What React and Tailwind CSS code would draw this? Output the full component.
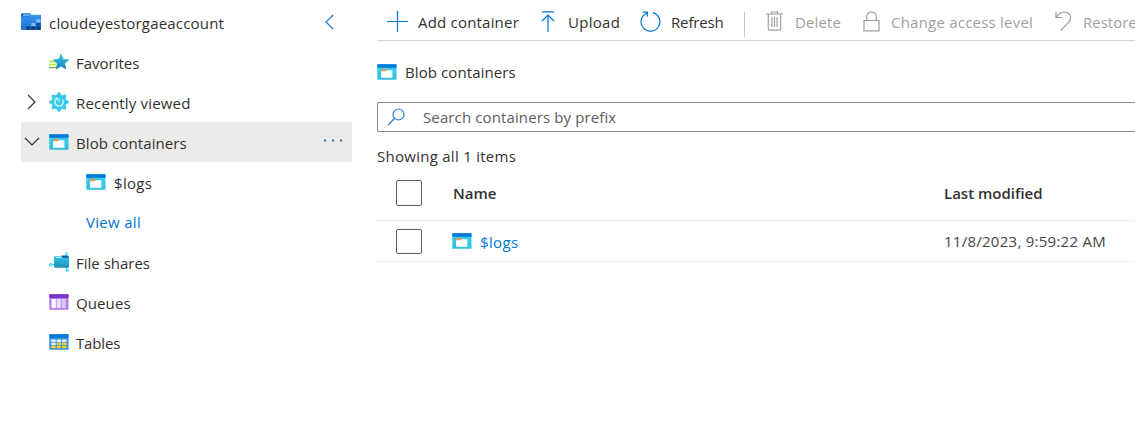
import React from "react";

function ContainerIcon({ className = "" }) {
  return (
    <svg width="20" height="16" viewBox="0 0 20 16" className={"shrink-0 " + className}>
      <defs>
        <linearGradient id="cyan" x1="0" y1="0" x2="0" y2="1">
          <stop offset="0" stopColor="#32d4f5" />
          <stop offset="1" stopColor="#32bedd" />
        </linearGradient>
      </defs>
      <rect x="0.3" y="0.2" width="19.2" height="15.6" rx="0.6" fill="url(#cyan)" />
      <rect x="0.3" y="0.2" width="19.2" height="3.6" rx="0.4" fill="#0078d4" />
      <path d="M4.400 5h4.400l1.200 1.200v2H4.400z" fill="#f0954a" />
      <path d="M4.100 7.200h4.600l1-1h5.700v7.500H4.100z" fill="#fff" />
    </svg>
  );
}

function StorageIcon() {
  return (
    <svg width="20" height="18" viewBox="0 0 20 18" className="shrink-0">
      <defs>
        <linearGradient id="folder" x1="0" y1="0" x2="0" y2="1">
          <stop offset="0" stopColor="#3a97f0" />
          <stop offset="1" stopColor="#1a73d6" />
        </linearGradient>
      </defs>
      <path d="M0 1.500Q0 .5 1 .5h8l1.300 1.300H20V17H0z" fill="url(#folder)" />
      <path d="M0 1.500Q0 .5 1 .5h8L8 3.600H0z" fill="#1b6fc9" />
      <rect x="2" y="1.400" width="6.500" height="1.300" rx=".6" fill="#8cc6ff" />
      <path d="M15.300 6.200h4.200v3.300h-4.200zM10.300 10h4.200v3.100h-4.200z" fill="#83b9f9" />
      <path d="M15.300 10h4.200v3.100h-4.200z" fill="#0a4ea8" />
      <path d="M5.300 13.600h4.200v3.200H5.300zM10.300 13.600h4.200v3.200h-4.200zM15.300 13.600h4.200v3.200h-4.200z" fill="#063c7a" />
    </svg>
  );
}

function FavoritesIcon() {
  return (
    <svg width="20" height="18" viewBox="0 0 20 18" className="shrink-0">
      <defs>
        <linearGradient id="star" x1="0" y1="0" x2="0" y2="1">
          <stop offset="0" stopColor="#35c3e8" />
          <stop offset="1" stopColor="#1b87b5" />
        </linearGradient>
      </defs>
      <path d="M0 8.500h7M0 11.500h7" stroke="#b4ec36" strokeWidth="1.300" />
      <path d="M0 14.500h7" stroke="#76a522" strokeWidth="1.200" />
      <path
        d="M12 1.200l2.300 5.200 5.300.5-4 3.600 1.200 5.500-4.800-2.900-4.800 2.900 1.200-5.500-4-3.600 5.300-.5z"
        fill="url(#star)"
        stroke="url(#star)"
        strokeWidth=".8"
        strokeLinejoin="round"
      />
    </svg>
  );
}

function RecentIcon() {
  return (
    <svg width="20" height="20" viewBox="0 0 20 20" className="shrink-0">
      <g fill="#35c9ec">
        <circle cx="10" cy="10" r="7.4" />
        {[0, 45, 90, 135, 180, 225, 270, 315].map((a) => (
          <path key={a} d="M8.700.7Q8.800.3 9.200.3h1.600q.4 0 .5.4L12.600 4H7.400z" transform={`rotate(${a} 10 10)`} />
        ))}
      </g>
      <path d="M7.300 7A4.100 4.100 0 1 0 13.300 7.400" fill="none" stroke="#d5f6fd" strokeWidth="1.500" />
      <path d="M5.800 5.600h3.200V8.800z" fill="#d5f6fd" />
      <path d="M10.200 6.600v4" fill="none" stroke="#b4ecf8" strokeWidth="1.200" />
    </svg>
  );
}

function FileShareIcon() {
  return (
    <svg width="20" height="20" viewBox="0 0 20 20" className="shrink-0">
      <defs>
        <linearGradient id="share" x1="0" y1="0" x2="0" y2="1">
          <stop offset="0" stopColor="#32c3e8" />
          <stop offset="1" stopColor="#2091b8" />
        </linearGradient>
      </defs>
      <path d="M2 12.500h5M17.500 1.500l-2 4M18.200 18.300l-1.500-4" stroke="#35b3d8" strokeWidth="1" />
      <path d="M12 3.600h7l.8 1v5h-5z" fill="#0f5ca8" />
      <path d="M5 5.200q0-1 1-1h6l1.600 1.600h5.500q.9 0 .9.900v8.100q0 1-1 1H6q-1 0-1-1z" fill="url(#share)" />
      <path d="M7 5h5l.9.900H7z" fill="#b7ecf8" />
      <circle cx="1.9" cy="12.6" r="1.9" fill="#50e6ff" />
      <circle cx="17.5" cy="1.7" r="1.5" fill="#50e6ff" />
      <circle cx="18.3" cy="18.2" r="1.7" fill="#50e6ff" />
    </svg>
  );
}

function QueuesIcon() {
  return (
    <svg width="20" height="16" viewBox="0 0 20 16" className="shrink-0">
      <rect x=".3" y=".2" width="19.2" height="15.6" rx=".6" fill="#b27eec" />
      <rect x=".3" y=".2" width="19.2" height="3.8" rx=".4" fill="#7733cc" />
      <rect x="2.6" y="5" width="4.2" height="9" fill="#fff" />
      <rect x="7.6" y="5" width="4.2" height="9" fill="#eadcfb" />
      <rect x="12.6" y="5" width="4.2" height="9" fill="#dcc5f8" />
    </svg>
  );
}

function TablesIcon() {
  return (
    <svg width="20" height="16" viewBox="0 0 20 16" className="shrink-0">
      <rect x=".3" y=".2" width="19.2" height="15.6" rx=".6" fill="#3b8fe4" />
      <rect x=".3" y=".2" width="19.2" height="3.8" rx=".4" fill="#0078d4" />
      <path d="M2.300 5.600h4.400v2.600H2.300zM7.700 5.600h4.400v2.600H7.700zM13.100 5.600h4.400v2.600h-4.400zM2.300 9h4.400v2.300H2.300z" fill="#e9f2fc" />
      <path d="M7.700 9h4.400v2.300H7.700zM13.100 9h4.400v2.300h-4.400zM2.300 12h4.400v2.300H2.300zM7.700 12h4.400v2.300H7.700zM13.100 12h4.400v2.300h-4.400z" fill="#fcd116" />
    </svg>
  );
}

function Line({ w, h, d, className = "", sw = 1.2 }) {
  return (
    <svg width={w} height={h} viewBox={`0 0 ${w} ${h}`} fill="none" stroke="currentColor" strokeWidth={sw} className={"shrink-0 " + className}>
      <path d={d} />
    </svg>
  );
}

function NavRow({ icon, label, text = "", chevron }) {
  return (
    <div className="flex h-10 items-center">
      <span className="flex w-7 shrink-0 text-[#323130]">{chevron}</span>
      {icon}
      <span className={"ml-[7px] pt-0.5 " + text}>{label}</span>
    </div>
  );
}

function Checkbox({ className }) {
  return <span className={"ml-[19px] w-[26px] shrink-0 rounded-[2px] border border-[#605e5c] " + className} />;
}

export default function App() {
  return (
    <div className="flex h-[436px] w-[1135px] overflow-hidden bg-white font-['Open_Sans',sans-serif] text-[15px] leading-5 whitespace-nowrap text-[#323130]">
      <nav className="ml-[21px] w-[331px] shrink-0 pt-0.5">
        <div className="flex h-10 items-center">
          <StorageIcon />
          <span className="ml-2 pt-0.5 tracking-[0.2px]">cloudeyestorgaeaccount</span>
          <Line w={9} h={16} d="M8.200 1L1 8l7.200 7" className="mr-[18px] ml-auto text-[#2b7cd3]" />
        </div>
        <NavRow icon={<FavoritesIcon />} label="Favorites" />
        <NavRow
          icon={<RecentIcon />}
          label="Recently viewed"
          text="tracking-[0.17px]"
          chevron={<Line w={9} h={16} d="M1 1l7 7-7 7" className="ml-1.5" />}
        />
        <div className="flex h-10 items-center bg-[#edebe9]">
          <Line w={16} h={10} d="M1 1l7 7 7-7" className="ml-[3px] text-[#323130]" />
          <ContainerIcon className="ml-[9px]" />
          <span className="ml-[7px] pt-0.5 tracking-[0.1px]">Blob containers</span>
          <svg width="18" height="3" viewBox="0 0 18 3" fill="#0078d4" className="mr-2.5 mb-[3px] ml-auto">
            <path d="M0 .5h2v2H0zM8 .5h2v2H8zM16 .5h2v2h-2z" />
          </svg>
        </div>
        <div className="flex h-10 items-center pl-[65px]">
          <ContainerIcon />
          <span className="ml-2 pt-0.5 tracking-[0.3px]">$logs</span>
        </div>
        <div className="flex h-10 items-center pl-[65px] text-[#0078d4]">
          <span className="tracking-[0.3px]">View all</span>
        </div>
        <NavRow icon={<FileShareIcon />} label="File shares" />
        <NavRow icon={<QueuesIcon />} label="Queues" text="tracking-[0.1px]" />
        <NavRow icon={<TablesIcon />} label="Tables" text="tracking-[-0.15px]" />
      </nav>

      <main className="ml-[25px] w-[758px] shrink-0">
        <div className="flex h-[41px] items-center border-b border-[#d2d0ce] pt-0.5">
          <div className="flex w-[153px] shrink-0 items-center pl-[10px]">
            <Line w={21} h={21} d="M0 10.500h21M10.500 0v21" className="text-[#0078d4]" />
            <span className="ml-2.5 pt-0.5 tracking-[0.2px]">Add container</span>
          </div>
          <div className="flex w-[103px] shrink-0 items-center pl-[11px]">
            <Line w={14} h={21} d="M1 .8h12M7 21V4.500M1 10l6-6 6 6" className="text-[#0078d4]" />
            <span className="ml-[13px] pt-0.5 tracking-[0.3px]">Upload</span>
          </div>
          <div className="flex w-[111px] shrink-0 items-center pl-[7px]">
            <Line w={21} h={21} d="M12.900 1.700A9.400 9.400 0 1 1 6.600 2.200M2.800 1.200h4.600v4.400" className="text-[#0078d4]" />
            <span className="ml-[10px] pt-0.5 tracking-[-0.15px]">Refresh</span>
          </div>
          <span className="mt-1.5 h-[25px] w-px shrink-0 bg-[#c8c6c4]" />
          <div className="flex shrink-0 items-center pl-[21px] text-[#a19f9d]">
            <Line w={17} h={20} d="M0 3h17M5.500 3V1h6v2M2.300 3v14.800q0 1.400 1.400 1.400h9.600q1.400 0 1.400-1.400V3M5.900 6v10M8.500 6v10M11.100 6v10" />
            <span className="ml-[12px] w-[55px] pt-0.5 tracking-[0.15px]">Delete</span>
            <Line w={17} h={21} d="M1 9.500h15v10.400H1zM3.700 9.500V5.600a4.800 4.800 0 0 1 9.600 0v3.900" className="ml-[13px]" />
            <span className="ml-[11px] w-[142px] pt-0.5 tracking-[0.22px]">Change access level</span>
            <Line w={17} h={20} d="M1 .5v6h6M1.400 6.100C4 2.200 7 1 9.600 1c3.400 0 6 2.600 6 6 0 2-.8 3.300-2.200 4.700L5.600 19.500" className="ml-[22px]" />
            <span className="ml-[11px] pt-0.5">Restore</span>
          </div>
        </div>

        <div className="flex h-[61px] items-center">
          <ContainerIcon />
          <span className="ml-2 tracking-[0.1px]">Blob containers</span>
        </div>

        <div className="flex h-[30px] items-center rounded-l-[2px] border border-r-0 border-[#8a8886] pl-[9px]">
          <Line w={18} h={18} d="M17 6.500a5.500 5.500 0 1 1-11 0a5.500 5.500 0 1 1 11 0M7.500 10.500L1 17" className="text-[#2b7cd3]" />
          <span className="ml-[18px] tracking-[0.12px] text-[#605e5c]">Search containers by prefix</span>
        </div>

        <div className="flex h-[34px] items-end">
          <span className="tracking-[0.27px]">Showing all 1 items</span>
        </div>

        <div className="flex h-[55px] items-center border-b border-[#edebe9] font-semibold">
          <Checkbox className="h-[26px]" />
          <span className="ml-[31px] w-[491px]">Name</span>
          <span>Last modified</span>
        </div>
        <div className="flex h-[41px] items-center border-b border-[#edebe9]">
          <Checkbox className="h-[25px]" />
          <ContainerIcon className="ml-[30px]" />
          <span className="ml-2 w-[464px] pt-0.5 tracking-[0.35px] text-[#0078d4]">$logs</span>
          <span className="tracking-[0.26px] text-[#484644]">11/8/2023, 9:59:22 AM</span>
        </div>
      </main>
    </div>
  );
}
